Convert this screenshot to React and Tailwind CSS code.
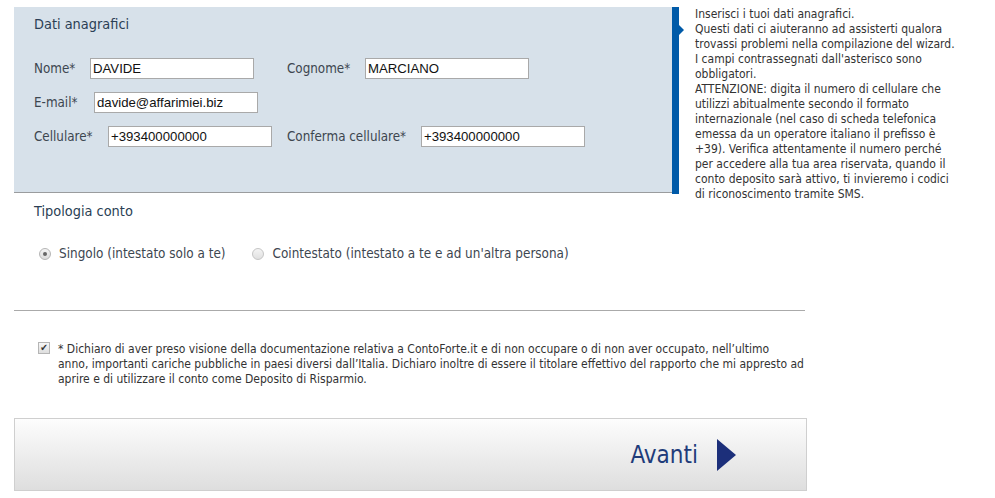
import React from "react";

const font = { fontFamily: '"DejaVu Sans Condensed", "DejaVu Sans", sans-serif' };

function Field({ label, value, labelW }) {
  return (
    <div className="flex items-center">
      <span className={`${labelW} text-[13.3px] text-[#3d4650]`}>{label}</span>
      <input
        readOnly
        value={value}
        className="w-[164px] h-[21px] border border-[#a9a9a9] bg-white px-[2px] text-[13.2px] text-[#111] outline-none"
        style={{ fontFamily: '"Liberation Sans", Arial, sans-serif' }}
      />
    </div>
  );
}

export default function App() {
  return (
    <div className="w-[995px] h-[498px] bg-white pl-[14px] pt-[7px] text-[#333]" style={font}>
      <div className="flex h-[186px] items-start">
        <div className="w-[658px] h-[186px] bg-[#d7e1ea] border-b border-[#9a9c9e] pl-[20px] pt-[9px]">
          <div className="text-[14.4px] leading-[16px] text-[#2b3f55]">Dati anagrafici</div>
          <div className="mt-[26px] flex flex-col gap-[13px]">
            <div className="flex">
              <Field label="Nome*" value="DAVIDE" labelW="w-[56px]" />
              <div className="ml-[33px]">
                <Field label="Cognome*" value="MARCIANO" labelW="w-[78px]" />
              </div>
            </div>
            <div className="flex">
              <Field label="E-mail*" value="davide@affarimiei.biz" labelW="w-[60px]" />
            </div>
            <div className="flex">
              <Field label="Cellulare*" value="+393400000000" labelW="w-[74px]" />
              <div className="ml-[15px]">
                <Field label="Conferma cellulare*" value="+393400000000" labelW="w-[134px]" />
              </div>
            </div>
          </div>
        </div>
        <div className="relative w-[7px] h-[187px] bg-[#005aa8]">
          <div className="absolute left-[7px] top-[18px] w-0 h-0 border-y-[5px] border-y-transparent border-l-[5px] border-l-[#005aa8]" />
        </div>
        <div className="ml-[16px] w-[290px] text-[12px] leading-[15px] text-[#333]">
          Inserisci i tuoi dati anagrafici.<br />
          Questi dati ci aiuteranno ad assisterti qualora<br />
          trovassi problemi nella compilazione del wizard.<br />
          I campi contrassegnati dall'asterisco sono<br />
          obbligatori.<br />
          ATTENZIONE: digita il numero di cellulare che<br />
          utilizzi abitualmente secondo il formato<br />
          internazionale (nel caso di scheda telefonica<br />
          emessa da un operatore italiano il prefisso è<br />
          +39). Verifica attentamente il numero perché<br />
          per accedere alla tua area riservata, quando il<br />
          conto deposito sarà attivo, ti invieremo i codici<br />
          di riconoscimento tramite SMS.
        </div>
      </div>

      <div className="w-[791px] border-b border-[#aaaaaa]">
        <div className="pl-[20px] pt-[10px] text-[14.4px] leading-[16px] text-[#2b3f55]">Tipologia conto</div>
        <div className="pl-[25px] mt-[25px] h-[66px] flex items-start text-[13.4px] leading-[20px] text-[#3d4650]">
          <label className="flex items-center">
            <span className="w-[12px] h-[12px] rounded-full border border-[#b5b5b5] bg-gradient-to-b from-[#f4f4f4] to-[#dcdcdc] flex items-center justify-center">
              <span className="w-[4px] h-[4px] rounded-full bg-[#666]" />
            </span>
            <span className="ml-[8px]">Singolo (intestato solo a te)</span>
          </label>
          <label className="flex items-center ml-[26px]">
            <span className="w-[12px] h-[12px] rounded-full border border-[#c5c5c5] bg-gradient-to-b from-[#f4f4f4] to-[#e0e0e0]" />
            <span className="ml-[9px]">Cointestato (intestato a te e ad un'altra persona)</span>
          </label>
        </div>
      </div>

      <div className="flex pl-[24px] pt-[31px] text-[12px] leading-[15px] text-[#333]">
        <div className="relative">
          <span className="absolute left-0 top-[0px] w-[12px] h-[12px] border border-[#b5b5b5] bg-gradient-to-b from-[#f6f6f6] to-[#dedede] text-[10px] leading-[10px] text-[#333] flex items-center justify-center">✔</span>
        </div>
        <div className="ml-[20px] w-[770px]">
          * Dichiaro di aver preso visione della documentazione relativa a ContoForte.it e di non occupare o di non aver occupato, nell’ultimo<br />
          anno, importanti cariche pubbliche in paesi diversi dall’Italia. Dichiaro inoltre di essere il titolare effettivo del rapporto che mi appresto ad<br />
          aprire e di utilizzare il conto come Deposito di Risparmio.
        </div>
      </div>

      <div className="mt-[31px] w-[793px] h-[73px] border border-[#cfcfcf] bg-gradient-to-b from-[#fdfdfd] to-[#dedede] flex items-center justify-end pr-[70px]">
        <span className="text-[24px] text-[#1f3c7a]" style={{ fontFamily: '"DejaVu Sans Condensed", sans-serif' }}>Avanti</span>
        <svg width="19" height="32" viewBox="0 0 19 32" className="ml-[19px]">
          <polygon points="0,0 19,16 0,32" fill="#1c2f7a" />
        </svg>
      </div>
    </div>
  );
}
